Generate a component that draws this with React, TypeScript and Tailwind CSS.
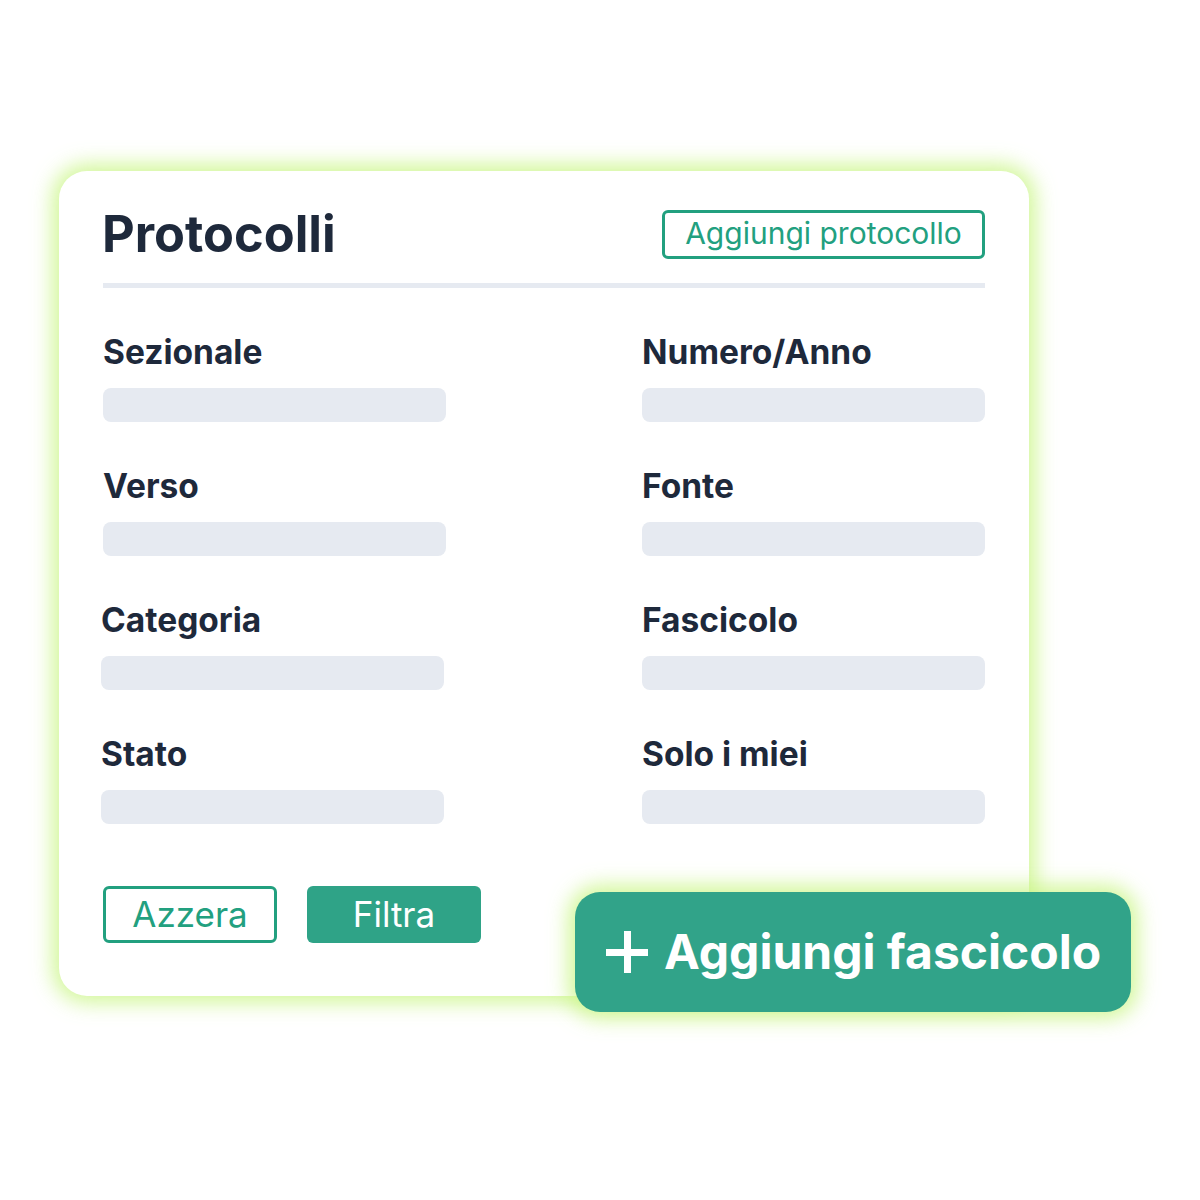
import React from "react";

const fields: [string, string, boolean][] = [
  ["Sezionale", "Numero/Anno", false],
  ["Verso", "Fonte", false],
  ["Categoria", "Fascicolo", true],
  ["Stato", "Solo i miei", true],
];

export default function App() {
  return (
    <div
      className="relative w-[1200px] h-[1200px] bg-white overflow-hidden"
      style={{ fontFamily: "Inter, 'Noto Sans', sans-serif" }}
    >
      <div className="ml-[59px] mt-[171px] w-[970px] h-[825px] rounded-[28px] bg-white shadow-[0_0_20px_7px_rgba(200,245,130,0.8)] pl-[44px] pr-[44px] pt-[39px]">
        <div className="flex items-center justify-between h-[49px]">
          <h1 className="text-[50.5px] leading-none font-bold text-[#1e293b] -ml-[1px]">Protocolli</h1>
          <button className="h-[49px] w-[323px] rounded-[6px] border-[3px] border-[#22a07f] text-[#22a07f] text-[30px] leading-none flex items-center justify-center pb-[4px]">
            Aggiungi protocollo
          </button>
        </div>
        <div className="mt-[24px] h-[5px] bg-[#e6eaf1]" />
        <div className="mt-[46px] flex flex-col gap-[46px]">
          {fields.map(([a, b, shift]) => (
            <div key={a} className="flex justify-between">
              <div className={shift ? "w-[343px] -ml-[2px]" : "w-[343px]"}>
                <div className="h-[36px] text-[33.5px] leading-[36px] font-bold text-[#1e293b]">{a}</div>
                <div className="mt-[18px] h-[34px] rounded-[8px] bg-[#e6eaf1]" />
              </div>
              <div className="w-[343px]">
                <div className="h-[36px] text-[33.5px] leading-[36px] font-bold text-[#1e293b]">{b}</div>
                <div className="mt-[18px] h-[34px] rounded-[8px] bg-[#e6eaf1]" />
              </div>
            </div>
          ))}
        </div>
        <div className="mt-[62px] flex gap-[30px]">
          <button className="w-[174px] h-[57px] rounded-[6px] border-[3px] border-[#22a07f] text-[#22a07f] text-[35px] leading-none flex items-center justify-center">
            Azzera
          </button>
          <button className="w-[174px] h-[57px] rounded-[6px] bg-[#2fa387] text-white text-[35px] leading-none flex items-center justify-center">
            Filtra
          </button>
        </div>
      </div>
      <button className="absolute left-[575px] top-[892px] w-[556px] h-[120px] rounded-[25px] bg-[#31a389] shadow-[0_0_20px_7px_rgba(200,245,130,0.8)] flex items-center pl-[31px] gap-[16px] text-white">
        <svg width="42" height="42" viewBox="0 0 42 42">
          <rect x="18" y="0" width="7" height="42" fill="white" />
          <rect x="0" y="18" width="42" height="7" fill="white" />
        </svg>
        <span className="text-[48px] font-bold leading-none">Aggiungi fascicolo</span>
      </button>
    </div>
  );
}
